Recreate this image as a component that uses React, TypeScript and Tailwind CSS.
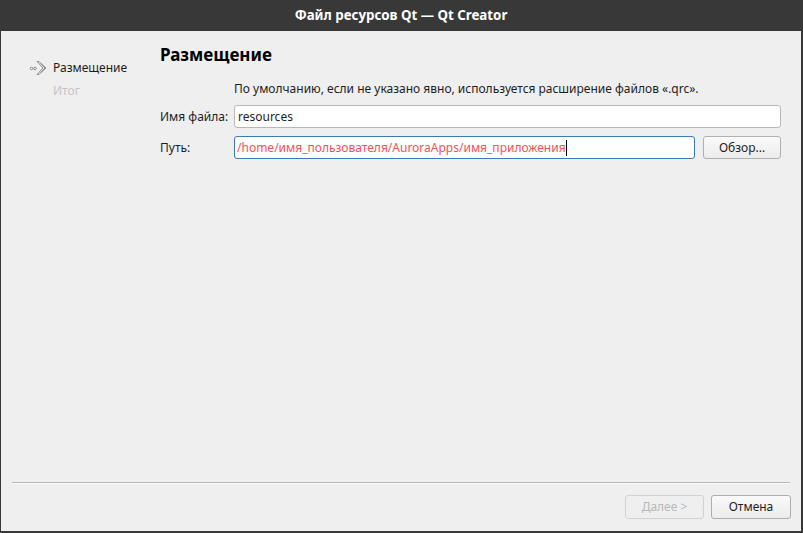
export default function App() {
  const font = { fontFamily: '"Noto Sans", "Open Sans", sans-serif' };
  return (
    <div
      className="w-[803px] h-[533px] bg-[#383838] flex flex-col pl-px pr-[2px] pb-[2px]"
      style={font}
    >
      <div className="h-[31px] flex items-center justify-center text-white font-bold text-[13.3px]">
        Файл ресурсов Qt — Qt Creator
      </div>
      <div className="flex-1 bg-[#efefef] flex flex-col text-[12px] text-[#1d1d1d]">
        <div className="flex-1 flex">
          {/* sidebar */}
          <div className="w-[159px] pt-[29px] pl-[28px] flex flex-col gap-[7px]">
            <div className="flex items-center gap-[6px] h-[16px]">
              <svg width="18" height="16" viewBox="0 0 18 16" fill="none" stroke="#8c8c8c" strokeWidth="1">
                <circle cx="2.5" cy="8.5" r="1.3" />
                <circle cx="6" cy="8.5" r="1.3" />
                <path d="M8 1.5 L14 8 L8 14.5 L10 14.5 L16 8 L10 1.5 Z" strokeLinejoin="round" />
                <path d="M12 3.5 L17 8 L12 12.5" />
              </svg>
              <span>Размещение</span>
            </div>
            <div className="pl-[24px] text-[#c4c4c4] h-[16px] flex items-center">Итог</div>
          </div>
          {/* main */}
          <div className="flex-1 pt-[12px] pr-[20px] flex flex-col">
            <div className="text-[17px] font-bold text-black h-[24px] flex items-center">Размещение</div>
            <div className="pl-[74px] mt-[14px] h-[16px] flex items-center">
              По умолчанию, если не указано явно, используется расширение файлов «.qrc».
            </div>
            <div className="flex items-center mt-[8px]">
              <div className="w-[74px]">Имя файла:</div>
              <div className="flex-1 h-[23px] bg-white border border-[#b8b8b8] rounded-[3px] flex items-center px-[3px]">
                resources
              </div>
            </div>
            <div className="flex items-center mt-[8px]">
              <div className="w-[74px]">Путь:</div>
              <div className="flex-1 h-[23px] bg-white border border-[#3c79b5] rounded-[3px] flex items-center px-[2px] text-[#f0535b]">
                /home/имя_пользователя/AuroraApps/имя_приложения
                <span className="w-px h-[16px] bg-black" />
              </div>
              <div className="ml-[8px] w-[78px] h-[23px] border border-[#b0b0b0] rounded-[3px] bg-gradient-to-b from-[#fafafa] to-[#ececec] flex items-center justify-center">
                Обзор...
              </div>
            </div>
          </div>
        </div>
        {/* footer */}
        <div className="mx-[11px] h-px bg-[#b5b5b5] border-b border-white box-content" />
        <div className="h-[47px] flex items-start justify-end pt-[11px] pr-[10px] gap-[7px]">
          <div className="w-[79px] h-[24px] border border-[#d2d2d2] rounded-[3px] flex items-center justify-center text-[#b8b8b8]">
            <span>
              <span className="underline">Д</span>алее &gt;
            </span>
          </div>
          <div className="w-[80px] h-[24px] border border-[#adadad] rounded-[3px] bg-gradient-to-b from-[#fafafa] to-[#ececec] flex items-center justify-center">
            Отмена
          </div>
        </div>
      </div>
    </div>
  );
}
